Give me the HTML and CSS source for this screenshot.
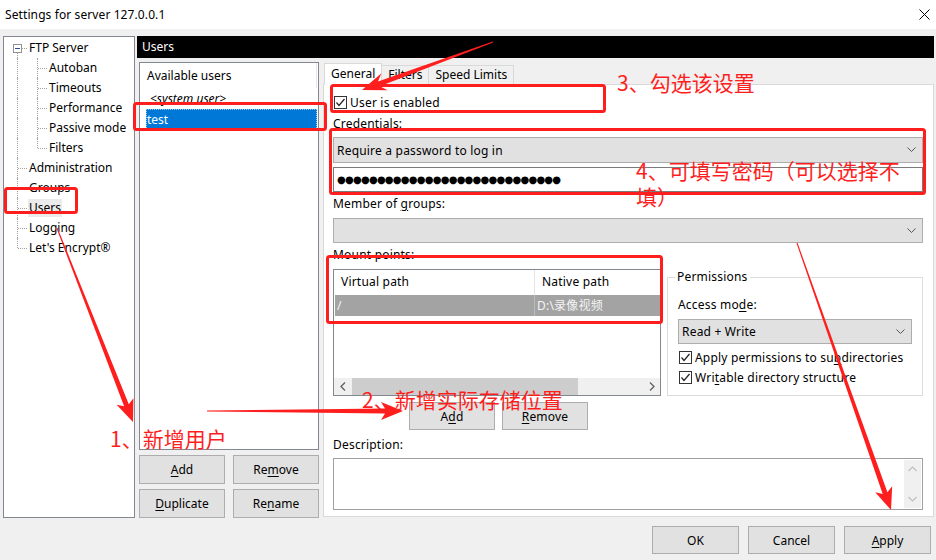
FILE: index.html
```html
<!DOCTYPE html>
<html lang="en">
<head>
    <meta charset="UTF-8">
    <title>Settings for server 127.0.0.1</title>
    <link rel="stylesheet" href="styles.css">
</head>
<body>
    <div class="titlebar">
        <span class="title">Settings for server 127.0.0.1</span>
        <svg class="close" width="11" height="11" viewBox="0 0 11 11"><path d="M0.5 0.5L10.5 10.5M10.5 0.5L0.5 10.5" stroke="#000" stroke-width="1"/></svg>
    </div>

    <div class="window">
        <div class="tree">
            <div class="node"><span class="gut first"><span class="minus"></span></span><span class="lbl">FTP Server</span></div>
            <div class="node"><span class="gut pass"></span><span class="gut"></span><span class="lbl">Autoban</span></div>
            <div class="node"><span class="gut pass"></span><span class="gut"></span><span class="lbl">Timeouts</span></div>
            <div class="node"><span class="gut pass"></span><span class="gut"></span><span class="lbl">Performance</span></div>
            <div class="node"><span class="gut pass"></span><span class="gut"></span><span class="lbl">Passive mode</span></div>
            <div class="node"><span class="gut pass"></span><span class="gut last"></span><span class="lbl">Filters</span></div>
            <div class="node"><span class="gut"></span><span class="lbl">Administration</span></div>
            <div class="node"><span class="gut"></span><span class="lbl">Groups</span></div>
            <div class="node"><span class="gut"></span><span class="lbl sel">Users</span></div>
            <div class="node"><span class="gut"></span><span class="lbl">Logging</span></div>
            <div class="node"><span class="gut last"></span><span class="lbl">Let's Encrypt®</span></div>
        </div>

        <div class="main">
            <div class="page-head">Users</div>
            <div class="page-body">
                <div class="users-col">
                    <div class="user-list">
                        <div class="ul-head">Available users</div>
                        <div class="ul-item sys">&lt;system user&gt;</div>
                        <div class="ul-item on">test</div>
                    </div>
                    <div class="btn-grid">
                        <span class="btn"><u>A</u>dd</span>
                        <span class="btn">Re<u>m</u>ove</span>
                        <span class="btn"><u>D</u>uplicate</span>
                        <span class="btn">Re<u>n</u>ame</span>
                    </div>
                </div>

                <div class="tabs-col">
                    <div class="tab-strip">
                        <span class="tab on">General</span>
                        <span class="tab">Filters</span>
                        <span class="tab">Speed Limits</span>
                    </div>
                    <div class="tab-page">
                        <div class="check-line"><span class="cb"><svg width="11" height="11" viewBox="0 0 11 11"><path d="M1.5 5.5L4 8.5L9.5 2" fill="none" stroke="#222" stroke-width="1.2"/></svg></span>User is enabled</div>
                        <div class="label gap5">Credentials:</div>
                        <div class="select gap5">
                            <span>Require a password to log in</span>
                            <svg width="9" height="6" viewBox="0 0 9 6"><path d="M0.5 0.5L4.5 4.5L8.5 0.5" fill="none" stroke="#555"/></svg>
                        </div>
                        <div class="pass-box gap4"><span class="dots">●●●●●●●●●●●●●●●●●●●●●●●●●●●●</span></div>
                        <div class="label gap4">Member of <u>g</u>roups:</div>
                        <div class="select gap6 short">
                            <span></span>
                            <svg width="9" height="6" viewBox="0 0 9 6"><path d="M0.5 0.5L4.5 4.5L8.5 0.5" fill="none" stroke="#555"/></svg>
                        </div>
                        <div class="label gap4">Mount points:</div>

                        <div class="mount-row gap6">
                            <div class="mount-list">
                                <div class="ml-head"><span class="c1">Virtual path</span><span class="c2">Native path</span></div>
                                <div class="ml-row"><span class="c1">/</span><span class="c2">D:\录像视频</span></div>
                                <div class="hscroll">
                                    <span class="arrow"><svg width="6" height="9" viewBox="0 0 6 9"><path d="M5 0.5L1 4.5L5 8.5" fill="none" stroke="#606060" stroke-width="1.3"/></svg></span>
                                    <span class="track"><span class="thumb"></span></span>
                                    <span class="arrow"><svg width="6" height="9" viewBox="0 0 6 9"><path d="M1 0.5L5 4.5L1 8.5" fill="none" stroke="#606060" stroke-width="1.3"/></svg></span>
                                </div>
                            </div>
                            <fieldset class="perms">
                                <legend>Permissions</legend>
                                <div class="label">Access mo<u>d</u>e:</div>
                                <div class="select gap6 rw">
                                    <span>Read + Write</span>
                                    <svg width="9" height="6" viewBox="0 0 9 6"><path d="M0.5 0.5L4.5 4.5L8.5 0.5" fill="none" stroke="#555"/></svg>
                                </div>
                                <div class="check-line gap4"><span class="cb"><svg width="11" height="11" viewBox="0 0 11 11"><path d="M1.5 5.5L4 8.5L9.5 2" fill="none" stroke="#222" stroke-width="1.2"/></svg></span>Apply permissions to su<u>b</u>directories</div>
                                <div class="check-line gap2"><span class="cb"><svg width="11" height="11" viewBox="0 0 11 11"><path d="M1.5 5.5L4 8.5L9.5 2" fill="none" stroke="#222" stroke-width="1.2"/></svg></span>Wri<u>t</u>able directory structure</div>
                            </fieldset>
                        </div>

                        <div class="mp-btns">
                            <span class="btn">A<u>d</u>d</span>
                            <span class="btn"><u>R</u>emove</span>
                        </div>

                        <div class="label gap7">Description:</div>
                        <div class="desc gap5">
                            <div class="vscroll">
                                <svg width="9" height="6" viewBox="0 0 9 6"><path d="M0.5 5L4.5 1L8.5 5" fill="none" stroke="#bfbfbf" stroke-width="1.2"/></svg>
                                <svg width="9" height="6" viewBox="0 0 9 6"><path d="M0.5 1L4.5 5L8.5 1" fill="none" stroke="#bfbfbf" stroke-width="1.2"/></svg>
                            </div>
                        </div>
                    </div>
                </div>
            </div>
        </div>
    </div>

    <div class="footer">
        <span class="btn">OK</span>
        <span class="btn">Cancel</span>
        <span class="btn"><u>A</u>pply</span>
    </div>

    <!-- red annotations drawn over the dialog -->
    <svg class="marks" width="936" height="560" viewBox="0 0 936 560">
        <g fill="none" stroke="#ff1e1e" stroke-width="3">
            <rect x="134.5" y="103.5" width="191" height="26" rx="2"/>
            <rect x="5.5" y="188.5" width="71" height="24" rx="2"/>
            <rect x="331.5" y="85.5" width="273" height="26" rx="2"/>
            <rect x="330.5" y="129.5" width="594" height="64" rx="2"/>
            <rect x="327.5" y="256.5" width="334" height="66" rx="2"/>
        </g>
        <g fill="#ff1e1e">
            <polygon points="56.5,228.2 124.1,406.2 116.6,404.8 133,422 133.4,398.2 128.8,404.3 57.5,227.8"/>
            <polygon points="207,411.5 385,413.5 381,420 403,411 381,402 385,408.5 207,410.5"/>
            <polygon points="492.8,41.5 378,81.5 381.4,73.3 362,90 387.6,90.2 379.8,86.2 493.2,42.5"/>
            <polygon points="796.5,243.2 882.7,493.9 875.2,492.2 891,510 892.2,486.3 887.4,492.2 797.5,242.8"/>
        </g>
    </svg>
    <span class="note n1">1、新增用户</span>
    <span class="note n2">2、新增实际存储位置</span>
    <span class="note n3">3、勾选该设置</span>
    <span class="note n4">4、可填写密码（可以选择不<br>填）</span>
</body>
</html>
```

FILE: styles.css
```css
body {
    margin: 0;
    width: 936px;
    height: 560px;
    overflow: hidden;
    position: relative;
    background: #f0f0f0;
    font-family: "Noto Sans", "Noto Sans CJK SC", sans-serif;
    font-size: 12px;
    color: #000;
}
u {
    text-decoration-thickness: 1px;
    text-underline-offset: 2px;
}
.titlebar {
    height: 29px;
    background: #fff;
    display: flex;
    align-items: center;
    justify-content: space-between;
    padding: 0 6px 0 5px;
    box-sizing: border-box;
}
.title {
    font-size: 12px;
    letter-spacing: 0.1px;
}
.window {
    display: flex;
    gap: 2px;
    height: 489px;
    box-sizing: border-box;
    padding: 7px 2px 0 3px;
}

/* tree on the left */
.tree {
    width: 132px;
    height: 482px;
    box-sizing: border-box;
    border: 1px solid #828790;
    background: #fff;
    padding: 1px 0 0 3px;
}
.node {
    display: flex;
    align-items: center;
    height: 20px;
}
.gut {
    position: relative;
    width: 20px;
    height: 20px;
    flex: none;
}
.gut::before {
    content: '';
    position: absolute;
    left: 10px;
    top: 0;
    bottom: 0;
    border-left: 1px dotted #a0a0a0;
}
.gut::after {
    content: '';
    position: absolute;
    left: 11px;
    right: 0;
    top: 10px;
    border-top: 1px dotted #a0a0a0;
}
.gut.pass::after {
    display: none;
}
.gut.last::before {
    bottom: 10px;
}
.gut.first::before {
    top: 15px;
}
.gut.first::after {
    left: 15px;
}
.minus {
    position: absolute;
    left: 6px;
    top: 6px;
    width: 9px;
    height: 9px;
    box-sizing: border-box;
    border: 1px solid #919191;
    background: #fff;
}
.minus::after {
    content: '';
    position: absolute;
    left: 1px;
    top: 3px;
    width: 5px;
    border-top: 1px solid #2b4f8c;
}
.lbl {
    margin-left: 1px;
    padding: 0 1px;
    line-height: 18px;
}
.lbl.sel {
    background: #ebebeb;
}

/* right side */
.main {
    width: 797px;
    display: flex;
    flex-direction: column;
}
.page-head {
    height: 22px;
    background: #000;
    color: #fff;
    line-height: 22px;
    padding-left: 5px;
}
.page-body {
    display: flex;
    gap: 4px;
    margin-top: 4px;
    padding-left: 2px;
}
.users-col {
    width: 180px;
}
.user-list {
    height: 388px;
    box-sizing: border-box;
    border: 1px solid #828790;
    background: #fff;
    padding: 0 1px 0 6px;
}
.ul-head {
    height: 25px;
    line-height: 26px;
    padding-left: 1px;
    border-right: 1px solid #e5e5e5;
}
.ul-item {
    height: 21px;
    line-height: 21px;
}
.ul-item.sys {
    font-style: italic;
    padding-left: 4px;
}
.ul-item.on {
    background: #0078d7;
    color: #fff;
    padding-left: 1px;
    outline: 1px dotted #9cc8ee;
    outline-offset: -1px;
}
.btn-grid {
    display: grid;
    grid-template-columns: 86px 86px;
    justify-content: space-between;
    row-gap: 5px;
    margin-top: 5px;
}
.btn {
    height: 29px;
    box-sizing: border-box;
    border: 1px solid #adadad;
    background: #e1e1e1;
    display: flex;
    align-items: center;
    justify-content: center;
}

.tabs-col {
    width: 611px;
    margin-top: 1px;
}
.tab-strip {
    display: flex;
    align-items: flex-end;
    height: 21px;
    padding-left: 1px;
}
.tab {
    height: 19px;
    box-sizing: border-box;
    border: 1px solid #d9d9d9;
    border-bottom: none;
    padding: 0 6px;
    line-height: 17px;
    margin-left: -1px;
}
.tab.on {
    height: 22px;
    margin-bottom: -1px;
    margin-left: 0;
    background: #fff;
    position: relative;
    line-height: 20px;
}
.tab-page {
    height: 433px;
    box-sizing: border-box;
    border: 1px solid #d9d9d9;
    background: #fff;
    padding: 8px 10px 0 9px;
    letter-spacing: 0.2px;
}
.gap2 { margin-top: 2px; }
.gap4 { margin-top: 4px; }
.gap5 { margin-top: 5px; }
.gap6 { margin-top: 6px; }
.gap7 { margin-top: 7px; }
.label {
    height: 16px;
    line-height: 16px;
}
.check-line {
    height: 18px;
    display: flex;
    align-items: center;
}
.cb {
    width: 13px;
    height: 13px;
    box-sizing: border-box;
    border: 1px solid #333;
    background: #fff;
    margin: 0 3px 0 1px;
    display: flex;
    align-items: center;
    justify-content: center;
}
.select {
    height: 26px;
    box-sizing: border-box;
    border: 1px solid #adadad;
    background: #e1e1e1;
    display: flex;
    align-items: center;
    justify-content: space-between;
    padding: 0 6px 0 3px;
}
.select.short {
    height: 25px;
}
.pass-box {
    height: 25px;
    box-sizing: border-box;
    border: 1px solid #7a7a7a;
    background: #fff;
    display: flex;
    align-items: center;
    padding-left: 3px;
}
.dots {
    font-family: "DejaVu Sans", sans-serif;
    font-size: 10px;
    letter-spacing: -0.75px;
}

.mount-row {
    display: flex;
    gap: 6px;
    height: 127px;
}
.mount-list {
    width: 328px;
    box-sizing: border-box;
    border: 1px solid #828790;
    display: flex;
    flex-direction: column;
}
.ml-head, .ml-row {
    display: flex;
}
.ml-head {
    height: 25px;
    line-height: 24px;
}
.ml-head .c1 {
    width: 201px;
    box-sizing: border-box;
    padding-left: 7px;
    border-right: 1px solid #e5e5e5;
}
.ml-head .c2 {
    padding-left: 7px;
}
.ml-row {
    height: 21px;
    line-height: 21px;
    background: #a3a3a3;
    color: #f4f4f4;
    margin-left: 1px;
}
.ml-row .c1 {
    width: 200px;
    box-sizing: border-box;
    padding-left: 2px;
    border-right: 1px solid #bcbcbc;
}
.ml-row .c2 {
    padding-left: 2px;
}
.hscroll {
    margin-top: auto;
    height: 17px;
    display: flex;
    background: #f0f0f0;
}
.hscroll .arrow {
    width: 17px;
    display: flex;
    align-items: center;
    justify-content: center;
}
.track {
    flex: 1;
    padding-left: 1px;
}
.thumb {
    display: block;
    width: 226px;
    height: 17px;
    background: #cdcdcd;
}
.perms {
    width: 256px;
    margin: 0;
    box-sizing: border-box;
    border: 1px solid #dcdcdc;
    padding: 12px 10px 0 10px;
}
.perms legend {
    padding: 0 2px;
    margin-left: -3px;
    line-height: 16px;
}
.select.rw {
    height: 25px;
}
.mp-btns {
    display: flex;
    gap: 7px;
    padding-left: 76px;
    margin-top: 6px;
}
.mp-btns .btn {
    width: 86px;
    height: 28px;
}
.desc {
    height: 52px;
    box-sizing: border-box;
    border: 1px solid #a0a0a0;
    display: flex;
    justify-content: flex-end;
    padding: 1px;
}
.vscroll {
    width: 17px;
    background: #f0f0f0;
    display: flex;
    flex-direction: column;
    align-items: center;
    justify-content: space-between;
    padding: 6px 0;
}

.footer {
    display: flex;
    justify-content: flex-end;
    gap: 9px;
    margin-top: 8px;
    padding-right: 5px;
}
.footer .btn {
    width: 87px;
    height: 28px;
}

/* annotations */
.marks {
    position: absolute;
    left: 0;
    top: 0;
    pointer-events: none;
}
.note {
    position: absolute;
    color: #ff1e1e;
    font-family: "Noto Sans CJK SC", sans-serif;
    font-size: 21px;
    line-height: 24px;
    white-space: nowrap;
}
.n1 { left: 110px; top: 426px; }
.n2 { left: 362px; top: 387px; }
.n3 { left: 617px; top: 70px; }
.n4 { left: 636px; top: 157px; line-height: 26px; }
```
